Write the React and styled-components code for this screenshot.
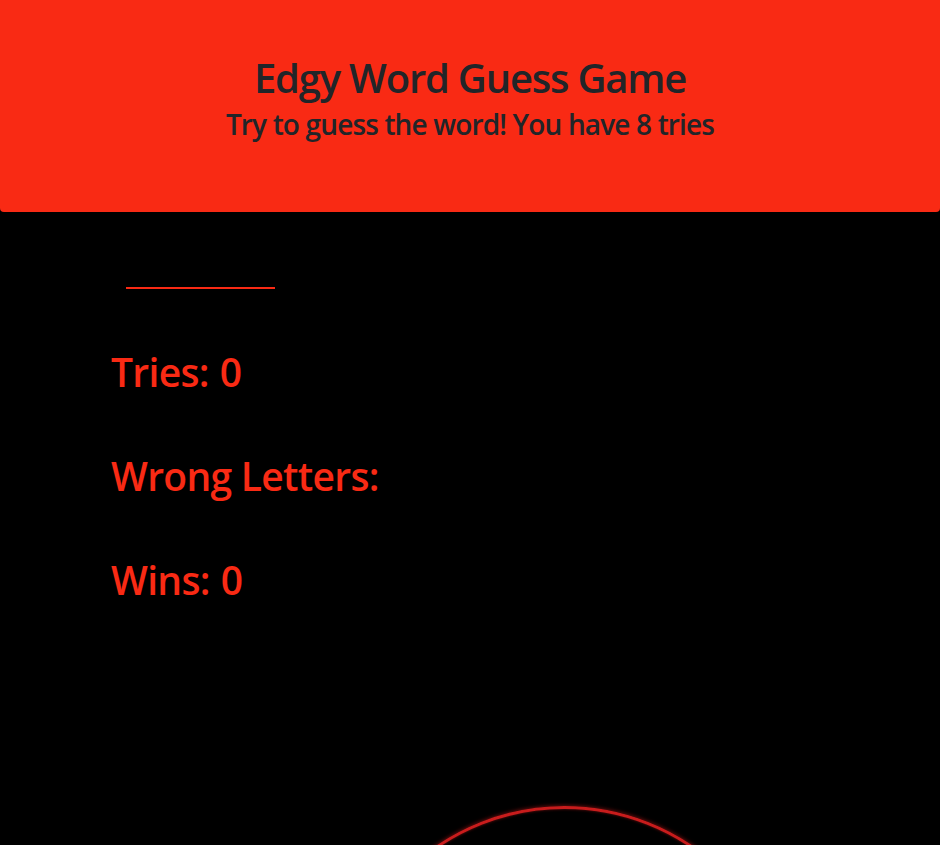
import React from "react";
import styled, { createGlobalStyle } from "styled-components";

const Global = createGlobalStyle`
  html, body { margin: 0; padding: 0; background: #000; }
  body { font-family: "Open Sans", "Noto Sans", sans-serif; overflow: hidden; height: 845px; }
`;

const Page = styled.div`
  width: 940px;
  height: 845px;
  overflow: hidden;
  background: #000;
  display: flex;
  flex-direction: column;
`;

const Header = styled.header`
  flex: none;
  height: 212px;
  box-sizing: border-box;
  background: #f92a14;
  border-radius: 0 0 4px 4px;
  display: flex;
  flex-direction: column;
  align-items: center;
  padding-top: 54px;
  color: #212529;
`;

const Title = styled.h1`
  margin: 0;
  font-size: 40px;
  font-weight: 600;
  line-height: 48px;
  letter-spacing: -1.2px;
`;

const Subtitle = styled.h3`
  margin: 5px 0 0;
  font-size: 28px;
  font-weight: 600;
  line-height: 34px;
  letter-spacing: -0.85px;
`;

const Body = styled.main`
  padding: 75px 0 0 111px;
  display: flex;
  flex-direction: column;
`;

const Word = styled.div`
  display: flex;
  width: 149px;
  margin-left: 15px;
  height: 2px;
`;

const Slot = styled.span`
  flex: 1;
  border-bottom: 2px solid #f92a14;
`;

const Stats = styled.div`
  margin-top: 59px;
  display: flex;
  flex-direction: column;
  gap: 56px;
`;

const Stat = styled.h2`
  margin: 0;
  font-size: 39px;
  font-weight: 600;
  line-height: 48px;
  color: #f92a14;
  letter-spacing: -0.7px;
  white-space: pre;
  display: flex;
  gap: 11px;
`;

const Stage = styled.div`
  flex: none;
  margin-top: 202px;
  padding-left: 337px;
  height: 60px;
`;

const Ring = styled.div`
  width: 449px;
  height: 449px;
  border-radius: 50%;
  border: 3.5px solid #c81c1c;
  box-shadow: 0 0 4px rgba(230, 30, 30, 0.6), inset 0 0 3px rgba(230, 30, 30, 0.5);
`;

export default function App() {
  const slots = Array.from({ length: 6 });
  const stats = [
    ["Tries:", "0"],
    ["Wrong Letters:", ""],
    ["Wins:", "0"],
  ];
  return (
    <>
      <Global />
      <Page>
        <Header>
          <Title>Edgy Word Guess Game</Title>
          <Subtitle>Try to guess the word! You have 8 tries</Subtitle>
        </Header>
        <Body>
          <Word>
            {slots.map((_, i) => (
              <Slot key={i} />
            ))}
          </Word>
          <Stats>
            {stats.map(([label, value]) => (
              <Stat key={label}>
                <span>{label}</span>
                {value && <span>{value}</span>}
              </Stat>
            ))}
          </Stats>
        </Body>
        <Stage>
          <Ring />
        </Stage>
      </Page>
    </>
  );
}
